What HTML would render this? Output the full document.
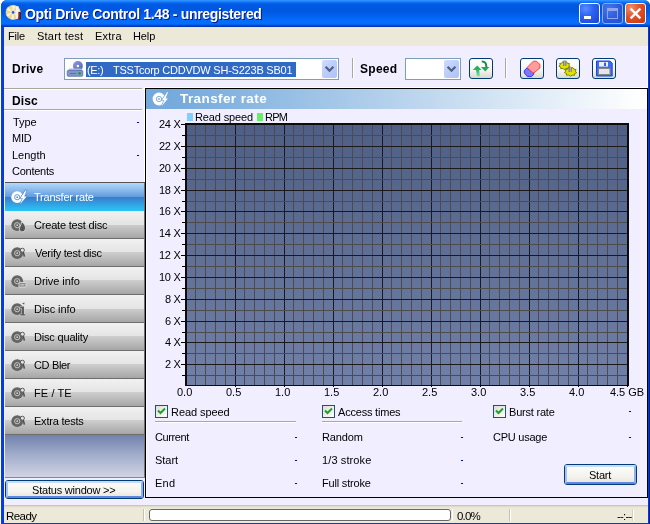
<!DOCTYPE html>
<html><head><meta charset="utf-8">
<title>Opti Drive Control 1.48 - unregistered</title>
<style>
*{box-sizing:border-box;margin:0;padding:0}
html,body{width:650px;height:524px;overflow:hidden;background:#fff}
body{position:relative;font-family:"Liberation Sans",sans-serif;font-size:11px;color:#000}
.a{position:absolute}
.t{position:absolute;white-space:pre;will-change:transform}
#win{left:1px;top:0;width:649px;height:524px;border-radius:6px 6px 0 0;background:linear-gradient(to right,#0a3ee0 0,#0838d8 3px,#0838d8 647px,#0838d8 648px,#001c98 648px)}
#title{left:1px;top:0;width:649px;height:27px;border-radius:6px 6px 0 0;
 background:linear-gradient(to bottom,#3392ff 0px,#2a8cff 1px,#0f74f8 2px,#0462ea 3.5px,#0059e2 5px,#0057e0 11px,#005ce8 14px,#0264f2 17px,#046efc 21px,#046efc 23.5px,#0262ee 24.5px,#0048cc 25.5px,#0030b0 27px)}
#menu{left:4px;top:27px;width:644px;height:19px;background:#ece9d8}
#client{left:4px;top:46px;width:644px;height:459px;background:#f0eeff}
.cb{position:absolute;border-radius:3px;border:1px solid #fff;width:21px;height:21px;top:3px;
 background:radial-gradient(circle at 30% 25%,#5a8eff 0%,#2c62f2 40%,#1a42d4 100%)}
.cb.x{background:radial-gradient(circle at 25% 20%,#f08e6c 0%,#e4542a 40%,#c6360c 100%)}
.cb.dis{border-color:#8fa8ee;background:radial-gradient(circle at 30% 25%,#4276ee 0%,#2a58dc 60%,#2450cf 100%)}
.sb{position:absolute;left:5px;width:140px;height:28px;border-bottom:1px solid #6e6e6e;border-right:1px solid #707070;
 background:linear-gradient(to bottom,#f1f1f1 0,#e4e4e4 13.5px,#cdcdcd 13.5px,#a6a6a6 27px)}
.sb.sel{border-bottom:0;background:linear-gradient(to bottom,#b2d9fc 0,#629adc 14px,#3a7acc 14px,#29c8f8 28px)}
.tb{position:absolute;top:58px;width:24px;height:21px;border:1px solid #003c74;border-radius:3px;
 background:linear-gradient(to bottom,#fff 0%,#f4f3ee 60%,#dcd8cc 100%)}
.combo{position:absolute;top:58px;height:22px;border:1px solid #7f9db9;background:#fff}
.dd{position:absolute;top:1px;right:1px;width:15px;height:18px;border-radius:2px;
 background:linear-gradient(135deg,#cfdcfd 0%,#bccdf9 50%,#adc3f7 100%)}
.sep{position:absolute;top:58px;width:2px;height:20px;border-left:1px solid #aca899;border-right:1px solid #fff}
.chk{position:absolute;width:13px;height:13px;border:1px solid #1c5180;background:linear-gradient(135deg,#dcdcd7,#fff)}
.btn{position:absolute;border:1px solid #003c74;border-radius:3px;background:linear-gradient(to bottom,#fdfdfb 0%,#f4f3ee 60%,#e6e3d8 100%)}
.btn i{position:absolute;left:0;top:0;right:0;bottom:0;border:2px solid;border-color:#c6dbfd #8fb0f0 #5f86e2 #a6c2f6;border-radius:2px}
</style></head><body>
<div id="win" class="a"></div>
<div id="title" class="a"></div>
<svg class="a" style="left:5px;top:4px" width="18" height="18" viewBox="0 0 18 18"><circle cx="8.1" cy="8.4" r="7.2" fill="#ecd794"/><path d="M8.1 8.4L14.87 10.86A7.2 7.2 0 0 1 12.92 13.75Z" fill="#fffbe8" opacity="0.75"/><path d="M8.1 8.4L9.35 15.49A7.2 7.2 0 0 1 5.88 15.25Z" fill="#fffbe8" opacity="0.75"/><path d="M8.1 8.4L2.58 13.03A7.2 7.2 0 0 1 1.06 9.90Z" fill="#fffbe8" opacity="0.75"/><path d="M8.1 8.4L1.33 5.94A7.2 7.2 0 0 1 3.28 3.05Z" fill="#fffbe8" opacity="0.75"/><path d="M8.1 8.4L6.85 1.31A7.2 7.2 0 0 1 10.32 1.55Z" fill="#fffbe8" opacity="0.75"/><path d="M8.1 8.4L13.62 3.77A7.2 7.2 0 0 1 15.14 6.90Z" fill="#fffbe8" opacity="0.75"/><circle cx="8.1" cy="8.4" r="7.2" fill="none" stroke="#d8bf78" stroke-width="0.6"/><circle cx="8.1" cy="8.4" r="2.4" fill="#e8e2d0"/><circle cx="8.1" cy="8.4" r="1.3" fill="#1560e8"/><path d="M10.6 2.2H13.6V4.4H13.2V14.8H11V4.4H10.6Z" fill="#f2f2f2"/><rect x="13.6" y="8" width="2.2" height="7.4" fill="#38100c"/><rect x="13.6" y="8.6" width="1.3" height="6.6" fill="#b01818"/></svg>
<div class="t" style="left:25px;top:6px;font-size:14px;line-height:17px;height:17px;letter-spacing:-0.325px;color:#fff;font-weight:bold;text-shadow:1px 1px 0 #0a1883">Opti Drive Control 1.48 - unregistered</div>
<div class="cb" style="left:579px"><div class="a" style="left:4px;top:12px;width:7px;height:3px;background:#fff"></div></div>
<div class="cb dis" style="left:602px"><div class="a" style="left:4px;top:4px;width:11px;height:11px;border:1px solid #8ea5ea;border-top-width:3px"></div></div>
<div class="cb x" style="left:625px"><svg class="a" style="left:0;top:0" width="19" height="19" viewBox="0 0 19 19"><path d="M4.6 4.6L14.4 14.4M14.4 4.6L4.6 14.4" stroke="#fff" stroke-width="2.4"/></svg></div>
<div id="menu" class="a"></div>
<div class="t" style="left:8px;top:30px;font-size:11px;line-height:13px;height:13px;letter-spacing:-0.211px;color:#000;">File</div>
<div class="t" style="left:37px;top:30px;font-size:11px;line-height:13px;height:13px;letter-spacing:0.229px;color:#000;">Start test</div>
<div class="t" style="left:95px;top:30px;font-size:11px;line-height:13px;height:13px;letter-spacing:0.207px;color:#000;">Extra</div>
<div class="t" style="left:133px;top:30px;font-size:11px;line-height:13px;height:13px;letter-spacing:-0.120px;color:#000;">Help</div>
<div id="client" class="a"></div>
<div class="t" style="left:12px;top:62px;font-size:12px;line-height:14px;height:14px;letter-spacing:0.299px;color:#000;font-weight:bold;">Drive</div>
<div class="combo" style="left:64px;width:275px"><svg class="a" style="left:0px;top:1px" width="20" height="19" viewBox="0 0 20 19"><defs><linearGradient id="dg" x1="0" y1="0" x2="1" y2="1"><stop offset="0" stop-color="#8f9ce0"/><stop offset="1" stop-color="#5560b8"/></linearGradient></defs><circle cx="12.9" cy="6" r="5" fill="url(#dg)"/><circle cx="12.9" cy="6" r="1.2" fill="#fff"/><path d="M4.5 8.5H16L17.8 10.8H2.2Z" fill="#a4b6de"/><rect x="2.2" y="10.5" width="15.6" height="5.8" rx="1" fill="#7e97c8" stroke="#5a6fa6" stroke-width="0.8"/><rect x="5" y="13" width="6" height="1" fill="#5a6fa6"/><circle cx="14.6" cy="13.3" r="1.4" fill="#1f9c4a"/></svg><div class="a" style="left:21px;top:3px;width:210px;height:15px;background:#316ac5"></div><div class="dd"><svg class="a" style="left:0;top:0" width="15" height="18" viewBox="0 0 15 18"><path d="M3.6 6.8L7.5 10.7L11.4 6.8" fill="none" stroke="#4d6185" stroke-width="2.3"/></svg></div></div>
<div class="t" style="left:87px;top:64px;font-size:11px;line-height:13px;height:13px;letter-spacing:-0.318px;color:#fff;">(E:)</div>
<div class="t" style="left:113px;top:64px;font-size:11px;line-height:13px;height:13px;letter-spacing:-0.224px;color:#fff;">TSSTcorp CDDVDW SH-S223B SB01</div>
<div class="sep" style="left:352px"></div>
<div class="t" style="left:360px;top:62px;font-size:12px;line-height:14px;height:14px;letter-spacing:0.281px;color:#000;font-weight:bold;">Speed</div>
<div class="combo" style="left:405px;width:56px"><div class="dd"><svg class="a" style="left:0;top:0" width="15" height="18" viewBox="0 0 15 18"><path d="M3.6 6.8L7.5 10.7L11.4 6.8" fill="none" stroke="#4d6185" stroke-width="2.3"/></svg></div></div>
<div class="tb" style="left:469px"><svg class="a" style="left:-1px;top:-1px" width="24" height="21" viewBox="0 0 24 21"><defs><linearGradient id="ug" x1="0" y1="0" x2="0" y2="1"><stop offset="0.3" stop-color="#20b062"/><stop offset="1" stop-color="#7fe0a8"/></linearGradient></defs><path d="M8.2 7.5L12.6 12H10.2L10.8 18.2H8L7 12H3.8Z" fill="url(#ug)"/><path d="M12.8 3.4Q17.2 3.2 17.4 9" fill="none" stroke="#1c8a4c" stroke-width="2"/><path d="M12 9H20.4L16.2 13.6Z" fill="#22a85e"/></svg></div>
<div class="sep" style="left:505px"></div>
<div class="tb" style="left:520px"><svg class="a" style="left:-1px;top:-1px" width="24" height="21" viewBox="0 0 24 21"><path d="M6.9 10L4.2 12.6L4.4 15L7.3 18.6H11.6L13.9 16L13.6 14.9Z" fill="#7878ff" stroke="#2828ff" stroke-width="0.9"/><path d="M13.3 3.2H16.2L19.9 6.3V10L13.9 14.9L12.2 14.3L7.3 9.7V9.3Z" fill="#ff9c9c" stroke="#ff3434" stroke-width="0.9"/></svg></div>
<div class="tb" style="left:556px"><svg class="a" style="left:-1px;top:-1px" width="24" height="21" viewBox="0 0 24 21"><polygon points="14.1,8.4 12.2,9.2 12.1,10.8 9.9,10.5 8.4,11.7 6.9,10.5 4.7,10.7 4.7,9.1 2.9,8.2 4.3,7.0 3.6,5.5 5.8,5.2 6.7,3.7 8.6,4.5 10.6,3.8 11.3,5.3 13.5,5.6 12.8,7.1" fill="#e2e200" stroke="#6a6a00" stroke-width="0.8"/><polygon points="20.8,14.7 18.7,15.6 18.5,17.3 16.1,17.1 14.4,18.3 12.8,17.0 10.4,17.2 10.4,15.5 8.4,14.5 9.9,13.1 9.2,11.4 11.6,11.1 12.6,9.5 14.7,10.3 16.9,9.6 17.8,11.2 20.1,11.6 19.3,13.3" fill="#e2e200" stroke="#6a6a00" stroke-width="0.8"/><rect x="7.3" y="2.6" width="3" height="5.4" fill="#6c6c7c"/><rect x="8.4" y="2.6" width="1" height="5.4" fill="#c8c8d8"/><rect x="12.6" y="9" width="3" height="5" fill="#6c6c7c"/><rect x="13.7" y="9" width="1" height="5" fill="#c8c8d8"/></svg></div>
<div class="tb" style="left:592px"><svg class="a" style="left:-1px;top:-1px" width="24" height="21" viewBox="0 0 24 21"><path d="M4.5 3H18L20.2 5.2V18H4.5Z" fill="#3c6cff" stroke="#1a48e8" stroke-width="1"/><rect x="7" y="4" width="9" height="4.6" fill="#f0efe4"/><rect x="12" y="4.6" width="2" height="3.4" fill="#2a5cff"/><rect x="6.4" y="10.4" width="11.6" height="6.2" fill="#e6e6e6" stroke="#808080" stroke-width="1"/></svg></div>
<div class="a" style="left:4px;top:88px;width:138px;height:1px;background:#aca899"></div><div class="a" style="left:4px;top:89px;width:138px;height:1px;background:#fff"></div>
<div class="t" style="left:12px;top:94px;font-size:12px;line-height:14px;height:14px;letter-spacing:0.136px;color:#000;font-weight:bold;">Disc</div>
<div class="a" style="left:4px;top:109px;width:138px;height:1px;background:#aca899"></div><div class="a" style="left:4px;top:110px;width:138px;height:1px;background:#fff"></div>
<div class="t" style="left:13px;top:116px;font-size:11px;line-height:13px;height:13px;letter-spacing:-0.106px;color:#000;">Type</div>
<div class="t" style="left:12px;top:132px;font-size:11px;line-height:13px;height:13px;letter-spacing:-0.267px;color:#000;">MID</div>
<div class="t" style="left:12px;top:149px;font-size:11px;line-height:13px;height:13px;letter-spacing:-0.006px;color:#000;">Length</div>
<div class="t" style="left:12px;top:165px;font-size:11px;line-height:13px;height:13px;letter-spacing:-0.253px;color:#000;">Contents</div>
<div class="a" style="left:137px;top:122px;width:2px;height:1px;background:#0000e0"></div>
<div class="a" style="left:137px;top:155px;width:2px;height:1px;background:#0000e0"></div>
<div class="a" style="left:5px;top:182px;width:140px;height:1px;background:#555"></div>
<div class="sb sel" style="top:183px"><svg class="a" style="left:1px;top:3px" width="24" height="22" viewBox="0 0 24 22"><circle cx="11.2" cy="11.2" r="5.9" fill="#fff"/><circle cx="11.2" cy="11.2" r="2.6" fill="none" stroke="#4f8fd8" stroke-width="0.9"/><circle cx="11.2" cy="11.2" r="0.9" fill="#4f8fd8"/><path d="M19.4 4.4L14.4 12.2H16.8L13.8 18.6L20.6 10.4H18.2L20.6 4.4Z" fill="#fff" stroke="#4a88d4" stroke-width="1.2" paint-order="stroke"/></svg></div>
<div class="t" style="left:34px;top:191px;font-size:11px;line-height:13px;height:13px;letter-spacing:-0.227px;color:#fff;">Transfer rate</div>
<div class="sb" style="top:211px"><svg class="a" style="left:1px;top:3px" width="24" height="22" viewBox="0 0 24 22"><circle cx="11.2" cy="11.2" r="5.9" fill="#646464"/><circle cx="11.2" cy="11.2" r="2.6" fill="none" stroke="#cfcfcf" stroke-width="0.9"/><circle cx="11.2" cy="11.2" r="0.9" fill="#cfcfcf"/><path d="M15.6 7.8C19 10 20.6 14 18.6 16.8C16.8 18.6 13.8 18 13.4 15.4C13.2 13 15.2 11.6 15.6 7.8Z" fill="#555" stroke="#dcdcdc" stroke-width="0.9"/></svg></div>
<div class="t" style="left:34px;top:219px;font-size:11px;line-height:13px;height:13px;letter-spacing:-0.198px;color:#000;">Create test disc</div>
<div class="sb" style="top:239px"><svg class="a" style="left:1px;top:3px" width="24" height="22" viewBox="0 0 24 22"><circle cx="11.2" cy="11.2" r="5.9" fill="#646464"/><circle cx="11.2" cy="11.2" r="2.6" fill="none" stroke="#cfcfcf" stroke-width="0.9"/><circle cx="11.2" cy="11.2" r="0.9" fill="#cfcfcf"/><path d="M17.2 10L18.4 14.6" stroke="#555" stroke-width="1.6"/><circle cx="16.4" cy="8.2" r="2.0" fill="#e4e4e4" stroke="#5a5a5a" stroke-width="1"/></svg></div>
<div class="t" style="left:35px;top:247px;font-size:11px;line-height:13px;height:13px;letter-spacing:-0.259px;color:#000;">Verify test disc</div>
<div class="sb" style="top:267px"><svg class="a" style="left:1px;top:3px" width="24" height="22" viewBox="0 0 24 22"><circle cx="11.2" cy="11.2" r="5.9" fill="#646464"/><circle cx="11.2" cy="11.2" r="2.6" fill="none" stroke="#cfcfcf" stroke-width="0.9"/><circle cx="11.2" cy="11.2" r="0.9" fill="#cfcfcf"/><rect x="13" y="12.5" width="7" height="4.6" rx="0.8" fill="#8a8a8a" stroke="#dcdcdc" stroke-width="0.9"/><rect x="14.5" y="14.4" width="4" height="1" fill="#ddd"/></svg></div>
<div class="t" style="left:34px;top:275px;font-size:11px;line-height:13px;height:13px;letter-spacing:-0.066px;color:#000;">Drive info</div>
<div class="sb" style="top:295px"><svg class="a" style="left:1px;top:3px" width="24" height="22" viewBox="0 0 24 22"><circle cx="11.2" cy="11.2" r="5.9" fill="#646464"/><circle cx="11.2" cy="11.2" r="2.6" fill="none" stroke="#cfcfcf" stroke-width="0.9"/><circle cx="11.2" cy="11.2" r="0.9" fill="#cfcfcf"/><path d="M14.2 8.5H18V16.2H19.4V17.6H14.2V16.2H15.6V10H14.2Z M16 5.4L18.4 4.6L18.2 6.6Z" fill="#5e5e5e" stroke="#dcdcdc" stroke-width="0.9" paint-order="stroke"/></svg></div>
<div class="t" style="left:34px;top:303px;font-size:11px;line-height:13px;height:13px;letter-spacing:-0.064px;color:#000;">Disc info</div>
<div class="sb" style="top:323px"><svg class="a" style="left:1px;top:3px" width="24" height="22" viewBox="0 0 24 22"><circle cx="11.2" cy="11.2" r="5.9" fill="#646464"/><circle cx="11.2" cy="11.2" r="2.6" fill="none" stroke="#cfcfcf" stroke-width="0.9"/><circle cx="11.2" cy="11.2" r="0.9" fill="#cfcfcf"/><path d="M17.2 10L18.4 14.6" stroke="#555" stroke-width="1.6"/><circle cx="16.4" cy="8.2" r="2.0" fill="#e4e4e4" stroke="#5a5a5a" stroke-width="1"/></svg></div>
<div class="t" style="left:34px;top:331px;font-size:11px;line-height:13px;height:13px;letter-spacing:-0.183px;color:#000;">Disc quality</div>
<div class="sb" style="top:351px"><svg class="a" style="left:1px;top:3px" width="24" height="22" viewBox="0 0 24 22"><circle cx="11.2" cy="11.2" r="5.9" fill="#646464"/><circle cx="11.2" cy="11.2" r="2.6" fill="none" stroke="#cfcfcf" stroke-width="0.9"/><circle cx="11.2" cy="11.2" r="0.9" fill="#cfcfcf"/><path d="M17.2 10L18.4 14.6" stroke="#555" stroke-width="1.6"/><circle cx="16.4" cy="8.2" r="2.0" fill="#e4e4e4" stroke="#5a5a5a" stroke-width="1"/></svg></div>
<div class="t" style="left:34px;top:359px;font-size:11px;line-height:13px;height:13px;letter-spacing:-0.344px;color:#000;">CD Bler</div>
<div class="sb" style="top:379px"><svg class="a" style="left:1px;top:3px" width="24" height="22" viewBox="0 0 24 22"><circle cx="11.2" cy="11.2" r="5.9" fill="#646464"/><circle cx="11.2" cy="11.2" r="2.6" fill="none" stroke="#cfcfcf" stroke-width="0.9"/><circle cx="11.2" cy="11.2" r="0.9" fill="#cfcfcf"/><path d="M17.2 10L18.4 14.6" stroke="#555" stroke-width="1.6"/><circle cx="16.4" cy="8.2" r="2.0" fill="#e4e4e4" stroke="#5a5a5a" stroke-width="1"/></svg></div>
<div class="t" style="left:34px;top:387px;font-size:11px;line-height:13px;height:13px;letter-spacing:0.099px;color:#000;">FE / TE</div>
<div class="sb" style="top:407px"><svg class="a" style="left:1px;top:3px" width="24" height="22" viewBox="0 0 24 22"><circle cx="11.2" cy="11.2" r="5.9" fill="#646464"/><circle cx="11.2" cy="11.2" r="2.6" fill="none" stroke="#cfcfcf" stroke-width="0.9"/><circle cx="11.2" cy="11.2" r="0.9" fill="#cfcfcf"/><path d="M17.2 10L18.4 14.6" stroke="#555" stroke-width="1.6"/><circle cx="16.4" cy="8.2" r="2.0" fill="#e4e4e4" stroke="#5a5a5a" stroke-width="1"/></svg></div>
<div class="t" style="left:34px;top:415px;font-size:11px;line-height:13px;height:13px;letter-spacing:-0.216px;color:#000;">Extra tests</div>
<div class="a" style="left:5px;top:435px;width:140px;height:43px;background:linear-gradient(to bottom,#7182ad 0%,#a4afcc 50%,#d0d3e4 100%);border-right:1px solid #777;border-bottom:1px solid #888"></div>
<div class="btn" style="left:5px;top:480px;width:139px;height:19px"><i></i></div>
<div class="t" style="left:32px;top:484px;font-size:11px;line-height:13px;height:13px;letter-spacing:-0.206px;color:#000;">Status window &gt;&gt;</div>
<div class="a" style="left:144px;top:87px;width:504px;height:1px;background:#fff"></div><div class="a" style="left:144px;top:87px;width:1px;height:95px;background:#fff"></div>
<div class="a" style="left:145px;top:88px;width:503px;height:410px;border:1px solid #000;background:#f0eeff"></div>
<div class="a" style="left:146px;top:89px;width:501px;height:20px;background:linear-gradient(to right,#72a8db 0%,#78acdd 8%,#fff 99%)"></div>
<svg class="a" style="left:150px;top:89px" width="22" height="20" viewBox="0 0 22 20"><circle cx="9" cy="10" r="6.4" fill="#fff"/><circle cx="9" cy="10" r="2.7" fill="none" stroke="#74a9db" stroke-width="0.9"/><circle cx="9" cy="10" r="0.9" fill="#74a9db"/><path d="M17.2 3L12 11.2H14.4L11.4 17.4L18 9.4H15.6L18 3Z" fill="#fff" stroke="#74a9db" stroke-width="1.3" paint-order="stroke"/></svg>
<div class="t" style="left:180px;top:91px;font-size:13.5px;line-height:16px;height:16px;letter-spacing:0.406px;color:#fff;font-weight:bold;">Transfer rate</div>
<div class="a" style="left:146px;top:109px;width:1px;height:388px;background:#fbfaff"></div>
<div class="a" style="left:187px;top:113px;width:6px;height:8px;background:#80d0ff"></div>
<div class="t" style="left:195px;top:111px;font-size:11px;line-height:13px;height:13px;letter-spacing:-0.124px;color:#000;">Read speed</div>
<div class="a" style="left:257px;top:113px;width:6px;height:8px;background:#6e6"></div>
<div class="t" style="left:265px;top:111px;font-size:11px;line-height:13px;height:13px;letter-spacing:-0.800px;color:#000;">RPM</div>
<svg class="a" style="left:0;top:0" width="650" height="524" viewBox="0 0 650 524" shape-rendering="crispEdges"><defs><linearGradient id="cg" x1="0" y1="0" x2="0" y2="1"><stop offset="0" stop-color="#4f5e84"/><stop offset="1" stop-color="#7080a8"/></linearGradient></defs><rect x="185" y="123" width="444" height="263" fill="url(#cg)"/><path d="M195.5 124V386" stroke="#4c4c4c"/><path d="M205.5 124V386" stroke="#4c4c4c"/><path d="M215.5 124V386" stroke="#4c4c4c"/><path d="M225.5 124V386" stroke="#4c4c4c"/><path d="M235.5 124V386" stroke="#1a1a1a"/><path d="M244.5 124V386" stroke="#4c4c4c"/><path d="M254.5 124V386" stroke="#4c4c4c"/><path d="M264.5 124V386" stroke="#4c4c4c"/><path d="M274.5 124V386" stroke="#4c4c4c"/><path d="M284.5 124V386" stroke="#1a1a1a"/><path d="M293.5 124V386" stroke="#4c4c4c"/><path d="M303.5 124V386" stroke="#4c4c4c"/><path d="M313.5 124V386" stroke="#4c4c4c"/><path d="M323.5 124V386" stroke="#4c4c4c"/><path d="M333.5 124V386" stroke="#1a1a1a"/><path d="M342.5 124V386" stroke="#4c4c4c"/><path d="M352.5 124V386" stroke="#4c4c4c"/><path d="M362.5 124V386" stroke="#4c4c4c"/><path d="M372.5 124V386" stroke="#4c4c4c"/><path d="M382.5 124V386" stroke="#1a1a1a"/><path d="M391.5 124V386" stroke="#4c4c4c"/><path d="M401.5 124V386" stroke="#4c4c4c"/><path d="M411.5 124V386" stroke="#4c4c4c"/><path d="M421.5 124V386" stroke="#4c4c4c"/><path d="M431.5 124V386" stroke="#1a1a1a"/><path d="M440.5 124V386" stroke="#4c4c4c"/><path d="M450.5 124V386" stroke="#4c4c4c"/><path d="M460.5 124V386" stroke="#4c4c4c"/><path d="M470.5 124V386" stroke="#4c4c4c"/><path d="M480.5 124V386" stroke="#1a1a1a"/><path d="M489.5 124V386" stroke="#4c4c4c"/><path d="M499.5 124V386" stroke="#4c4c4c"/><path d="M509.5 124V386" stroke="#4c4c4c"/><path d="M519.5 124V386" stroke="#4c4c4c"/><path d="M529.5 124V386" stroke="#1a1a1a"/><path d="M538.5 124V386" stroke="#4c4c4c"/><path d="M548.5 124V386" stroke="#4c4c4c"/><path d="M558.5 124V386" stroke="#4c4c4c"/><path d="M568.5 124V386" stroke="#4c4c4c"/><path d="M578.5 124V386" stroke="#1a1a1a"/><path d="M587.5 124V386" stroke="#4c4c4c"/><path d="M597.5 124V386" stroke="#4c4c4c"/><path d="M607.5 124V386" stroke="#4c4c4c"/><path d="M617.5 124V386" stroke="#4c4c4c"/><path d="M186 135.5H628" stroke="#4c4c4c"/><path d="M186 146.5H628" stroke="#1a1a1a"/><path d="M186 157.5H628" stroke="#4c4c4c"/><path d="M186 168.5H628" stroke="#1a1a1a"/><path d="M186 179.5H628" stroke="#4c4c4c"/><path d="M186 190.5H628" stroke="#1a1a1a"/><path d="M186 201.5H628" stroke="#4c4c4c"/><path d="M186 211.5H628" stroke="#1a1a1a"/><path d="M186 222.5H628" stroke="#4c4c4c"/><path d="M186 233.5H628" stroke="#1a1a1a"/><path d="M186 244.5H628" stroke="#4c4c4c"/><path d="M186 255.5H628" stroke="#1a1a1a"/><path d="M186 266.5H628" stroke="#4c4c4c"/><path d="M186 277.5H628" stroke="#1a1a1a"/><path d="M186 288.5H628" stroke="#4c4c4c"/><path d="M186 299.5H628" stroke="#1a1a1a"/><path d="M186 310.5H628" stroke="#4c4c4c"/><path d="M186 321.5H628" stroke="#1a1a1a"/><path d="M186 332.5H628" stroke="#4c4c4c"/><path d="M186 342.5H628" stroke="#1a1a1a"/><path d="M186 353.5H628" stroke="#4c4c4c"/><path d="M186 364.5H628" stroke="#1a1a1a"/><path d="M186 375.5H628" stroke="#4c4c4c"/><path d="M185 123H629V125H187V385H185Z M627 123H629V386H185V385H627Z" fill="#0c0c0c"/><path d="M181 124.5H185" stroke="#000"/><path d="M182 135.5H185" stroke="#000"/><path d="M181 146.5H185" stroke="#000"/><path d="M182 157.5H185" stroke="#000"/><path d="M181 168.5H185" stroke="#000"/><path d="M182 179.5H185" stroke="#000"/><path d="M181 190.5H185" stroke="#000"/><path d="M182 201.5H185" stroke="#000"/><path d="M181 211.5H185" stroke="#000"/><path d="M182 222.5H185" stroke="#000"/><path d="M181 233.5H185" stroke="#000"/><path d="M182 244.5H185" stroke="#000"/><path d="M181 255.5H185" stroke="#000"/><path d="M182 266.5H185" stroke="#000"/><path d="M181 277.5H185" stroke="#000"/><path d="M182 288.5H185" stroke="#000"/><path d="M181 299.5H185" stroke="#000"/><path d="M182 310.5H185" stroke="#000"/><path d="M181 321.5H185" stroke="#000"/><path d="M182 332.5H185" stroke="#000"/><path d="M181 342.5H185" stroke="#000"/><path d="M182 353.5H185" stroke="#000"/><path d="M181 364.5H185" stroke="#000"/><path d="M182 375.5H185" stroke="#000"/><path d="M235.5 386V387" stroke="#000"/><path d="M284.5 386V387" stroke="#000"/><path d="M333.5 386V387" stroke="#000"/><path d="M382.5 386V387" stroke="#000"/><path d="M431.5 386V387" stroke="#000"/><path d="M480.5 386V387" stroke="#000"/><path d="M529.5 386V387" stroke="#000"/><path d="M578.5 386V387" stroke="#000"/><path d="M627.5 386V387" stroke="#000"/></svg>
<div class="t" style="left:159px;top:118px;font-size:11px;line-height:13px;height:13px;letter-spacing:-0.300px;color:#000;">24 X</div>
<div class="t" style="left:159px;top:140px;font-size:11px;line-height:13px;height:13px;letter-spacing:-0.300px;color:#000;">22 X</div>
<div class="t" style="left:159px;top:162px;font-size:11px;line-height:13px;height:13px;letter-spacing:-0.300px;color:#000;">20 X</div>
<div class="t" style="left:159px;top:184px;font-size:11px;line-height:13px;height:13px;letter-spacing:-0.300px;color:#000;">18 X</div>
<div class="t" style="left:159px;top:205px;font-size:11px;line-height:13px;height:13px;letter-spacing:-0.300px;color:#000;">16 X</div>
<div class="t" style="left:159px;top:227px;font-size:11px;line-height:13px;height:13px;letter-spacing:-0.300px;color:#000;">14 X</div>
<div class="t" style="left:159px;top:249px;font-size:11px;line-height:13px;height:13px;letter-spacing:-0.300px;color:#000;">12 X</div>
<div class="t" style="left:159px;top:271px;font-size:11px;line-height:13px;height:13px;letter-spacing:-0.300px;color:#000;">10 X</div>
<div class="t" style="left:165px;top:293px;font-size:11px;line-height:13px;height:13px;letter-spacing:-0.300px;color:#000;">8 X</div>
<div class="t" style="left:165px;top:315px;font-size:11px;line-height:13px;height:13px;letter-spacing:-0.300px;color:#000;">6 X</div>
<div class="t" style="left:165px;top:336px;font-size:11px;line-height:13px;height:13px;letter-spacing:-0.300px;color:#000;">4 X</div>
<div class="t" style="left:165px;top:358px;font-size:11px;line-height:13px;height:13px;letter-spacing:-0.300px;color:#000;">2 X</div>
<div class="t" style="left:177px;top:386px;font-size:11px;line-height:13px;height:13px;letter-spacing:0.000px;color:#000;">0.0</div>
<div class="t" style="left:226px;top:386px;font-size:11px;line-height:13px;height:13px;letter-spacing:0.000px;color:#000;">0.5</div>
<div class="t" style="left:275px;top:386px;font-size:11px;line-height:13px;height:13px;letter-spacing:0.000px;color:#000;">1.0</div>
<div class="t" style="left:324px;top:386px;font-size:11px;line-height:13px;height:13px;letter-spacing:0.000px;color:#000;">1.5</div>
<div class="t" style="left:373px;top:386px;font-size:11px;line-height:13px;height:13px;letter-spacing:0.000px;color:#000;">2.0</div>
<div class="t" style="left:422px;top:386px;font-size:11px;line-height:13px;height:13px;letter-spacing:0.000px;color:#000;">2.5</div>
<div class="t" style="left:471px;top:386px;font-size:11px;line-height:13px;height:13px;letter-spacing:0.000px;color:#000;">3.0</div>
<div class="t" style="left:520px;top:386px;font-size:11px;line-height:13px;height:13px;letter-spacing:0.000px;color:#000;">3.5</div>
<div class="t" style="left:569px;top:386px;font-size:11px;line-height:13px;height:13px;letter-spacing:0.000px;color:#000;">4.0</div>
<div class="t" style="left:610px;top:386px;font-size:11px;line-height:13px;height:13px;letter-spacing:-0.042px;color:#000;">4.5 GB</div>
<div class="chk" style="left:155px;top:405px"><svg class="a" style="left:1px;top:1px" width="9" height="9" viewBox="0 0 9 9"><path d="M1 3.5L3.5 6L8 1.5" fill="none" stroke="#21a121" stroke-width="2"/></svg></div>
<div class="t" style="left:171px;top:406px;font-size:11px;line-height:13px;height:13px;letter-spacing:-0.068px;color:#000;">Read speed</div>
<div class="chk" style="left:322px;top:405px"><svg class="a" style="left:1px;top:1px" width="9" height="9" viewBox="0 0 9 9"><path d="M1 3.5L3.5 6L8 1.5" fill="none" stroke="#21a121" stroke-width="2"/></svg></div>
<div class="t" style="left:338px;top:406px;font-size:11px;line-height:13px;height:13px;letter-spacing:-0.198px;color:#000;">Access times</div>
<div class="chk" style="left:493px;top:405px"><svg class="a" style="left:1px;top:1px" width="9" height="9" viewBox="0 0 9 9"><path d="M1 3.5L3.5 6L8 1.5" fill="none" stroke="#21a121" stroke-width="2"/></svg></div>
<div class="t" style="left:509px;top:406px;font-size:11px;line-height:13px;height:13px;letter-spacing:-0.210px;color:#000;">Burst rate</div>
<div class="a" style="left:155px;top:421px;width:141px;height:1px;background:#aca899"></div><div class="a" style="left:155px;top:422px;width:141px;height:1px;background:#fff"></div>
<div class="a" style="left:322px;top:421px;width:140px;height:1px;background:#aca899"></div><div class="a" style="left:322px;top:422px;width:140px;height:1px;background:#fff"></div>
<div class="t" style="left:155px;top:431px;font-size:11px;line-height:13px;height:13px;letter-spacing:-0.407px;color:#000;">Current</div>
<div class="t" style="left:155px;top:454px;font-size:11px;line-height:13px;height:13px;letter-spacing:-0.037px;color:#000;">Start</div>
<div class="t" style="left:155px;top:477px;font-size:11px;line-height:13px;height:13px;letter-spacing:0.270px;color:#000;">End</div>
<div class="t" style="left:322px;top:431px;font-size:11px;line-height:13px;height:13px;letter-spacing:-0.110px;color:#000;">Random</div>
<div class="t" style="left:322px;top:454px;font-size:11px;line-height:13px;height:13px;letter-spacing:0.114px;color:#000;">1/3 stroke</div>
<div class="t" style="left:322px;top:477px;font-size:11px;line-height:13px;height:13px;letter-spacing:-0.184px;color:#000;">Full stroke</div>
<div class="t" style="left:493px;top:431px;font-size:11px;line-height:13px;height:13px;letter-spacing:-0.244px;color:#000;">CPU usage</div>
<div class="a" style="left:295px;top:437px;width:2px;height:1px;background:#0000e0"></div>
<div class="a" style="left:295px;top:460px;width:2px;height:1px;background:#0000e0"></div>
<div class="a" style="left:295px;top:483px;width:2px;height:1px;background:#0000e0"></div>
<div class="a" style="left:461px;top:437px;width:2px;height:1px;background:#0000e0"></div>
<div class="a" style="left:461px;top:460px;width:2px;height:1px;background:#0000e0"></div>
<div class="a" style="left:461px;top:483px;width:2px;height:1px;background:#0000e0"></div>
<div class="a" style="left:629px;top:411px;width:2px;height:1px;background:#0000e0"></div>
<div class="a" style="left:629px;top:437px;width:2px;height:1px;background:#0000e0"></div>
<div class="btn" style="left:564px;top:464px;width:73px;height:21px"><i></i></div>
<div class="t" style="left:589px;top:469px;font-size:11px;line-height:13px;height:13px;letter-spacing:-0.212px;color:#000;">Start</div>
<div class="a" style="left:4px;top:505px;width:644px;height:18px;background:linear-gradient(to bottom,#beb9a6 0,#d9d5c4 1px,#e6e3d3 2px,#ece9d8 3.5px)"></div>
<div class="t" style="left:6px;top:509px;font-size:11.5px;line-height:14px;height:14px;letter-spacing:-0.544px;color:#000;">Ready</div>
<div class="a" style="left:143px;top:509px;width:1px;height:12px;background:#c5c2b2"></div><div class="a" style="left:144px;top:509px;width:1px;height:12px;background:#fff"></div>
<div class="a" style="left:149px;top:509px;width:302px;height:12px;border:1px solid #686868;border-radius:3px;background:#fff"></div>
<div class="a" style="left:452px;top:509px;width:1px;height:12px;background:#fff"></div>
<div class="t" style="left:457px;top:509px;font-size:11.5px;line-height:14px;height:14px;letter-spacing:-0.800px;color:#000;">0.0%</div>
<div class="a" style="left:509px;top:509px;width:1px;height:12px;background:#c5c2b2"></div><div class="a" style="left:510px;top:509px;width:1px;height:12px;background:#fff"></div>
<div class="t" style="left:617px;top:509px;font-size:11.5px;line-height:14px;height:14px;letter-spacing:-0.800px;color:#000;">--:--</div>
<div class="a" style="left:632px;top:509px;width:1px;height:12px;background:#d6d2c2"></div><div class="a" style="left:633px;top:509px;width:1px;height:12px;background:#fff"></div>
<div class="a" style="left:647px;top:46px;width:1px;height:42px;background:#fff"></div>
</body></html>
